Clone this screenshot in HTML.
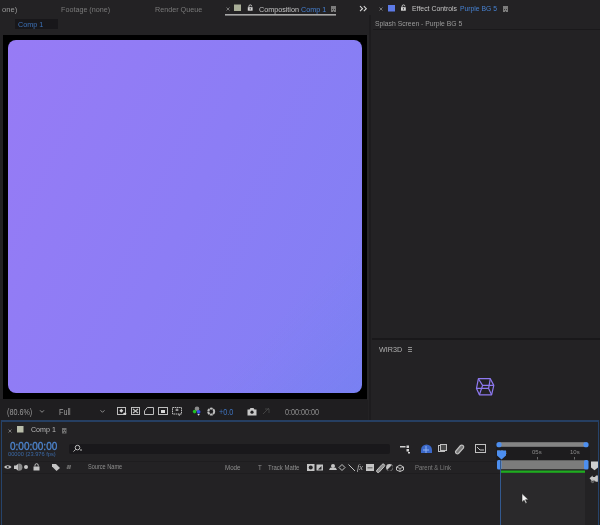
<!DOCTYPE html>
<html><head><meta charset="utf-8">
<style>
*{margin:0;padding:0;box-sizing:border-box}
html,body{width:600px;height:525px;overflow:hidden;background:#232224;font-family:"Liberation Sans",sans-serif;position:relative}
.a{position:absolute;white-space:nowrap;line-height:1}
.t{font-size:7.2px;color:#7a7a7a}
.w{color:#c4c4c4}
.b{color:#4f8ee0}
svg{position:absolute;overflow:visible}
.a{will-change:transform}
</style></head><body>
<!-- ============ top tab bar ============ -->
<div class="a t" style="left:1.5px;top:5.6px;color:#9a9a9a;font-size:7.6px">one)</div>
<div class="a t" style="left:61px;top:5.6px;">Footage (none)</div>
<div class="a t" style="left:155px;top:5.6px;">Render Queue</div>
<svg style="left:0;top:0" width="600" height="17">
  <g stroke="#8a8a8a" stroke-width="0.8"><path d="M226.5 7.5l3 3M229.5 7.5l-3 3"/></g>
  <rect x="234" y="4.5" width="7" height="6.5" fill="#a9ae98"/>
  <g fill="none" stroke="#cfcfcf" stroke-width="0.9"><path d="M248.9 7.3v-1a1.4 1.4 0 0 1 2.8 0"/></g>
  <rect x="247.8" y="7.2" width="4.8" height="3.5" fill="#d4d4d4"/>
  <rect x="249.7" y="8.2" width="1" height="1.3" fill="#232224"/>
  <rect x="225" y="14" width="111" height="1.6" fill="#a8a8a8"/>
  <rect x="331" y="6" width="5" height="6" fill="#7c7c7c"/><g fill="#3a3a3a"><rect x="332" y="9" width="1" height="1"/><rect x="334" y="9" width="1" height="1"/><rect x="333" y="11" width="1" height="1"/></g>
  <g fill="none" stroke="#d8d8d8" stroke-width="1.1"><path d="M360 6.2l2.5 2.5l-2.5 2.5M363.8 6.2l2.5 2.5l-2.5 2.5"/></g>
  <g stroke="#8a8a8a" stroke-width="0.8"><path d="M379.5 7.5l3 3M382.5 7.5l-3 3"/></g>
  <rect x="388" y="5" width="7" height="6.5" fill="#5d7ae6"/>
  <g fill="none" stroke="#cfcfcf" stroke-width="0.9"><path d="M402.1 7.3v-1a1.4 1.4 0 0 1 2.8 0"/></g>
  <rect x="401" y="7.2" width="4.8" height="3.5" fill="#d4d4d4"/>
  <rect x="402.9" y="8.2" width="1" height="1.3" fill="#232224"/>
  <rect x="503" y="6" width="5" height="6" fill="#7c7c7c"/><g fill="#3a3a3a"><rect x="504" y="9" width="1" height="1"/><rect x="506" y="9" width="1" height="1"/><rect x="505" y="11" width="1" height="1"/></g>
</svg>
<div class="a t w" style="left:259px;top:5.6px;">Composition</div>
<div class="a t b" style="left:300.5px;top:5.6px;color:#4680d0">Comp 1</div>
<div class="a t w" style="left:412px;top:5.6px;font-size:6.9px">Effect Controls</div>
<div class="a t b" style="left:460px;top:5.6px;font-size:6.8px;color:#4680d0">Purple BG 5</div>

<!-- ============ comp panel ============ -->
<div class="a" style="left:15px;top:19px;width:43px;height:9.5px;background:#18171a"></div>
<div class="a t b" style="left:18px;top:21px;color:#3d72b8">Comp 1</div>
<div class="a" style="left:3px;top:35px;width:364px;height:364px;background:#000"></div>
<div class="a" style="left:8px;top:40px;width:353.6px;height:353.4px;border-radius:8px;background:linear-gradient(135deg,rgba(90,135,230,0) 78%,rgba(95,130,235,0.25) 100%),linear-gradient(115deg,#977bf5 0%,#8c7df5 50%,#8180f4 100%)"></div>

<!-- toolbar -->
<div class="a" style="left:0;top:399px;width:368px;height:21px;background:#1f1e20"></div>
<div class="a t" style="left:7px;top:407.5px;color:#9a9a9a;transform:scaleY(1.15);transform-origin:0 0">(80.6%)</div>
<div class="a t" style="left:59px;top:407.5px;color:#a0a0a0;transform:scaleY(1.15);transform-origin:0 0">Full</div>
<div class="a t b" style="left:219px;top:407.5px;color:#3f74c0;transform:scaleY(1.15);transform-origin:0 0">+0.0</div>
<div class="a t" style="left:285px;top:407.5px;color:#909090;transform:scaleY(1.15);transform-origin:0 0">0:00:00:00</div>
<svg style="left:0;top:0" width="368" height="420">
  <g fill="none" stroke="#9a9a9a" stroke-width="0.9"><path d="M40 410.3l2 2l2-2M100.5 410.3l2 2l2-2"/></g>
  <g fill="none" stroke="#bdbdbd" stroke-width="1">
    <rect x="117.5" y="407.5" width="8" height="7"/>
    <rect x="131.5" y="407.5" width="8" height="7"/>
    <path d="M133 409l5 4M138 409l-5 4" stroke-width="1.3"/>
    <path d="M144.5 414.5v-3.5l2.8-3.5h6.2v7z"/>
    <rect x="158.5" y="407.5" width="9" height="7"/>
    <rect x="172.5" y="407.5" width="9" height="6.5" stroke-dasharray="1.6 0.6"/>
    <path d="M177 408.5v2.5M175.5 410h3"/>
    <circle cx="211.2" cy="411.6" r="3" stroke-width="2" stroke-dasharray="2.6 0.55"/>
  </g>
  <path d="M121.3 408.8l2 2l-2 2l-2-2z" fill="#d6d6d6"/><rect x="123.3" y="412.8" width="3" height="2" rx="0.8" fill="#d6d6d6"/>
  <rect x="161" y="410" width="4" height="3" fill="#d8d8d8"/>
  <path d="M178 414.5h2.5l-1.25 1.5z" fill="#cfcfcf"/>
  <circle cx="197" cy="408.8" r="2.3" fill="#8c8c8c"/>
  <circle cx="194.6" cy="411.6" r="1.8" fill="#22c022"/>
  <circle cx="198.6" cy="411.8" r="1.9" fill="#3550e0"/>
  <path d="M197.3 414h2.6l-1.3 1.8z" fill="#d8d8d8"/>
  <path d="M247.5 409.5h2l1-1.5h3l1 1.5h2v6h-9z" fill="#c8c8c8"/>
  <circle cx="252" cy="412.2" r="1.6" fill="#1f1e20"/>
  <g fill="none" stroke="#4a4a4a" stroke-width="0.8"><path d="M263 414l6-6M265 409h4v4"/></g>
</svg>

<!-- ============ right panel ============ -->
<div class="a" style="left:367px;top:35px;width:2px;height:365px;background:#262527"></div><div class="a" style="left:369px;top:15px;width:1.5px;height:405px;background:#1d1c1e"></div>
<div class="a t" style="left:375px;top:21.4px;color:#9a9a9a;font-size:6.8px">Splash Screen - Purple BG 5</div>
<div class="a" style="left:373px;top:29.3px;width:227px;height:1px;background:#1a191b"></div>
<div class="a" style="left:372px;top:338px;width:228px;height:1.5px;background:#19181a"></div>
<div class="a t w" style="left:379px;top:346px;color:#b0b0b0">WIR3D</div>
<svg style="left:0;top:0" width="600" height="420">
  <g fill="#8a8a8a"><rect x="408" y="347" width="4" height="1"/><rect x="408" y="349" width="4" height="1"/><rect x="408" y="351" width="4" height="1"/></g>
  <g fill="none" stroke="#8e79f0" stroke-width="1.2" stroke-linejoin="round">
    <path d="M478.4 378.7h11.9l3.5 6.7l-2.2 9.4h-12.2l-2.9-6.4z"/>
    <path d="M478.4 378.7l4.2 6.7h11.2M482.6 385.4l-3.2 9.4M490.3 378.7l-1.7 9.7h-12.1M488.6 388.4l3 6.4"/>
  </g>
</svg>

<!-- ============ timeline panel ============ -->
<div class="a" style="left:1px;top:420px;width:598px;height:106px;border:1px solid #26436a;border-top:2px solid #263f62;border-bottom:none;background:#232224"></div>
<div class="a t w" style="left:31px;top:426.8px;color:#b8b8b8;font-size:7.1px;transform:scaleY(1.1);transform-origin:0 0">Comp 1</div>
<div class="a" style="left:10px;top:441px;font-size:10px;color:#4d84cc;-webkit-text-stroke:0.3px #4d84cc;transform:scaleY(1.18);transform-origin:0 0">0:00:00:00</div>
<div class="a" style="left:8px;top:452px;font-size:5.7px;color:#3b6aa8">00000 (23.976 fps)</div>
<div class="a" style="left:69px;top:443.8px;width:321px;height:10.2px;border-radius:2px;background:#19181b"></div>
<div class="a" style="left:3px;top:460.5px;width:493px;height:1px;background:#1e1d1f"></div>
<div class="a" style="left:3px;top:472.5px;width:497px;height:1px;background:#1e1d1f"></div>
<div class="a t" style="left:88px;top:463.6px;font-size:5.6px;color:#8e8e8e;transform:scaleY(1.25);transform-origin:0 0">Source Name</div>
<div class="a t" style="left:225px;top:463.6px;font-size:6.2px;color:#8e8e8e;transform:scaleY(1.2);transform-origin:0 0">Mode</div>
<div class="a t" style="left:258px;top:463.6px;font-size:6.2px;color:#8e8e8e;transform:scaleY(1.2);transform-origin:0 0">T</div>
<div class="a t" style="left:268px;top:463.6px;font-size:6px;color:#8e8e8e;transform:scaleY(1.25);transform-origin:0 0">Track Matte</div>
<div class="a t" style="left:415px;top:463.6px;font-size:6px;color:#7e7e7e;transform:scaleY(1.25);transform-origin:0 0">Parent &amp; Link</div>
<div class="a t" style="left:356.5px;top:463px;font-size:8.5px;font-style:italic;font-family:'Liberation Serif',serif;color:#b8b8b8">fx</div>
<div class="a" style="left:496px;top:447px;width:94px;height:13px;background:#1d1c1e"></div>
<div class="a t" style="left:532px;top:449.3px;font-size:6px;color:#8a8a8a">05s</div>
<div class="a t" style="left:570px;top:449.3px;font-size:6px;color:#8a8a8a">10s</div>
<div class="a t" style="left:497px;top:449.3px;font-size:6px;color:#8a8a8a">00s</div>
<svg style="left:0;top:0" width="600" height="525">
  <g stroke="#8a8a8a" stroke-width="0.8"><path d="M8.5 429.5l3 3M11.5 429.5l-3 3"/></g>
  <rect x="17" y="426" width="6.5" height="6.5" fill="#b9bdaa"/>
  <rect x="62" y="428" width="4.5" height="5.5" fill="#6e6e6e"/><g fill="#333"><rect x="63" y="430" width="1" height="1"/><rect x="65" y="430" width="1" height="1"/><rect x="64" y="432" width="1" height="1"/></g>
  <!-- magnifier -->
  <g fill="none" stroke="#bdbdbd" stroke-width="1"><circle cx="77.5" cy="447.6" r="2.3"/><path d="M75.8 449.3l-2.3 2.3"/></g>
  <rect x="80" y="449.5" width="2" height="1" fill="#bdbdbd"/>
  <!-- timeline top icons -->
  <g fill="#d0d0d0"><rect x="400" y="446" width="5.5" height="1.5"/><rect x="406.5" y="445.5" width="2.5" height="2.5"/><rect x="406.5" y="449" width="2.5" height="2.5"/><rect x="408" y="452" width="2" height="1.5"/></g>
  <g fill="none" stroke="#c0c0c0" stroke-width="1">
    <rect x="438.5" y="445.5" width="6" height="6"/><rect x="440.5" y="444.5" width="6" height="6" fill="#4a4a4a"/>
    <path d="M455.5 451.5l5-6a2 2 0 0 1 3 2.5l-5 5.5a2 2 0 0 1 -3 -2z" fill="#777" stroke-width="1.2"/>
    <rect x="475.5" y="444.5" width="10" height="8"/>
    <path d="M477 447l3 3h4"/>
  </g>
  <path d="M421 453v-3a5.5 5.5 0 0 1 11 0v3z" fill="#3b68c8"/>
  <path d="M426 446v7M423 450h6" stroke="#8db0f0" stroke-width="1"/>
  <!-- navigator bar -->
  <rect x="499" y="442.2" width="86" height="4.6" fill="#848484"/>
  <circle cx="499" cy="444.7" r="2.6" fill="#4d8ff0"/>
  <circle cx="586" cy="444.7" r="2.6" fill="#4d8ff0"/>
  <!-- ticks -->
  <rect x="537" y="457" width="1" height="2.5" fill="#6a6a6a"/>
  <rect x="574" y="457" width="1" height="2.5" fill="#6a6a6a"/>
  <!-- work area bar -->
  <rect x="500" y="460.3" width="85" height="8.9" fill="#7c7c7c"/>
  <rect x="497" y="460" width="4.5" height="9.5" rx="1.5" fill="#4d8ff0"/>
  <rect x="584" y="460" width="4.5" height="9.5" rx="1.5" fill="#4d8ff0"/>
  <rect x="500" y="470.5" width="85" height="2.3" fill="#20ac20"/>
  <!-- layer area -->
  <rect x="501" y="473" width="84" height="52" fill="#2a292b"/>
  <rect x="500" y="460" width="1" height="65" fill="#33598f"/>
  <!-- CTI -->
  <path d="M497 450.5h9v5l-4.5 4l-4.5-4z" fill="#4d8ff0"/>
  <!-- right shield -->
  <path d="M591 461.5h7v6l-3.5 2.7l-3.5-2.7z" fill="#cfcfcf"/>
  <path d="M589.5 478.2l3.2-2.6v1.4h2.2l1.2-1.6h1.8v6.4h-2l-1.6-1.3h-1.6v1.3z" fill="#c8c8c8"/><circle cx="592.6" cy="481.3" r="1.3" fill="none" stroke="#a0a0a0" stroke-width="0.7"/>
  <!-- cursor -->
  <path d="M522 493.6v8.6l2.1-2l1.6 3.2l1.3-0.6l-1.5-3.1h3z" fill="#f4f4f4" stroke="#151515" stroke-width="0.5"/>
  <!-- header row icons -->
  <g fill="#c4c4c4">
    <path d="M4 467a4 2.6 0 0 0 7.5 0a4 2.6 0 0 0 -7.5 0z"/>
    <path d="M14 465.5h2l2.5-2v7.5l-2.5-2h-2z"/><path d="M18.8 463.6a3.3 3.3 0 0 1 0 7.2z" fill="#8a8a8a"/>
    <circle cx="26" cy="467" r="2"/>
    <rect x="33.5" y="466.5" width="6" height="4"/>
    <path d="M52 464h4l4 4l-3.5 3l-4.5-4.5z"/>
    <rect x="307" y="464" width="7.5" height="7"/>
    <rect x="316.5" y="464.5" width="6.5" height="6"/>
    <path d="M329 470h8l-1.2-2.2h-5.6z"/><circle cx="333" cy="466" r="2"/>
    <rect x="366" y="464" width="8" height="7"/>
    <circle cx="389.5" cy="467.5" r="3.4"/>
  </g>
  <circle cx="7.75" cy="467" r="1.1" fill="#232224"/>
  <g fill="none" stroke="#c4c4c4" stroke-width="1">
    <path d="M35 466.5v-1.2a1.6 1.6 0 0 1 3.2 0v1.2"/>
    <path d="M67.5 469l1-4M69.5 469l1-4M67 466h4M66.5 468h4" stroke="#707070"/>
    <path d="M342 464.5l3 3l-3 3l-3-3z"/>
    <path d="M348.5 464.5l6.5 6.5"/>
    <path d="M377 470l5-5.5a1.5 1.5 0 0 1 2.3 2l-5 5.5a1.5 1.5 0 0 1 -2.3-2z" fill="#8a8a8a"/>
    <path d="M396.5 467l3.5-2l3.5 2v3l-3.5 1.5l-3.5-1.5z"/><path d="M400 468.5v3M396.5 467l3.5 1.5l3.5-1.5" stroke-width="0.8"/>
  </g>
  <circle cx="310.75" cy="467.5" r="2" fill="#232224"/>
  <path d="M318 469.5l3.5-3.5v3.5z" fill="#232224"/>
  <path d="M367.5 467h5v1.5h-5z" fill="#7a7a7a"/>
  <path d="M387.1 469.9l4.8-4.8a3.4 3.4 0 0 1 -4.8 4.8z" fill="#232224"/>
</svg>
</body></html>
